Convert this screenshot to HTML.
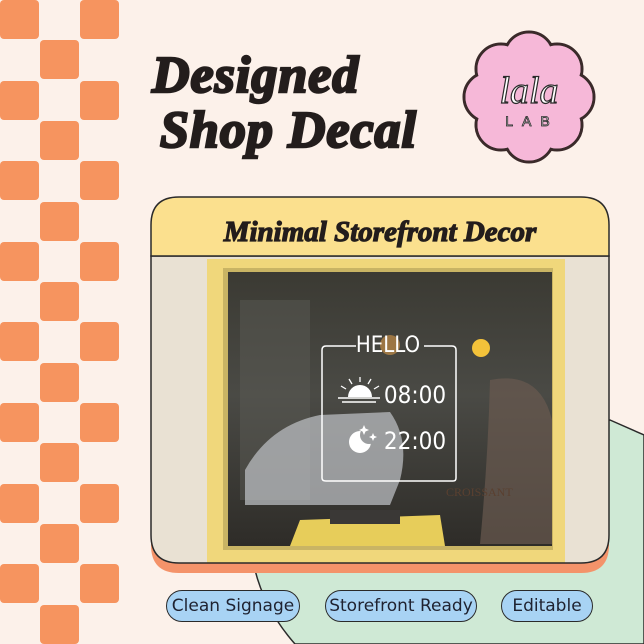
<!DOCTYPE html>
<html><head><meta charset="utf-8"><style>
*{margin:0;padding:0;box-sizing:border-box}
body{width:644px;height:644px;overflow:hidden;background:#fcf1ea;position:relative;font-family:"Liberation Sans",sans-serif}
.sq{position:absolute;width:39px;height:39px;background:#f6945f;border-radius:4px}
.title{position:absolute;left:152px;font-family:"Liberation Serif",serif;font-weight:bold;font-style:italic;color:#231d1c;font-size:52px;letter-spacing:1px;line-height:1;-webkit-text-stroke:2.5px #231d1c}
.pill{position:absolute;top:590px;height:32px;border:1.5px solid #2a2a2a;border-radius:16px;background:#a8d3f4;font-size:17px;color:#1f2230;display:flex;align-items:center;justify-content:center;font-family:"DejaVu Sans",sans-serif}
</style></head><body>
<div id="chk"></div>
<script>
var h='';for(var r=0;r<16;r++){var cols=r%2==0?[0,2]:[1];cols.forEach(function(c){h+='<div class="sq" style="left:'+(c*40)+'px;top:'+(r*40.3)+'px"></div>';});}
document.getElementById('chk').innerHTML=h;
</script>
<div class="title" style="top:50px">Designed</div>
<div class="title" style="top:105px;left:160px">Shop Decal</div>

<svg style="position:absolute;left:0;top:0" width="644" height="644">
 <path d="M610 420 L644 435 L644 644 L295 644 Q265 610 255 570 Z" fill="#cfe9d5" stroke="#2a2a2a" stroke-width="1.5"/>
 <g transform="translate(529,97)">
  <g fill="#f6b8d8" stroke="#3a2a2a" stroke-width="3">
   <circle cx="0" cy="-40" r="25"/><circle cx="28" cy="-28" r="25"/><circle cx="40" cy="0" r="25"/><circle cx="28" cy="28" r="25"/>
   <circle cx="0" cy="40" r="25"/><circle cx="-28" cy="28" r="25"/><circle cx="-40" cy="0" r="25"/><circle cx="-28" cy="-28" r="25"/>
  </g>
  <g fill="#f6b8d8">
   <circle cx="0" cy="-40" r="23.5"/><circle cx="28" cy="-28" r="23.5"/><circle cx="40" cy="0" r="23.5"/><circle cx="28" cy="28" r="23.5"/>
   <circle cx="0" cy="40" r="23.5"/><circle cx="-28" cy="28" r="23.5"/><circle cx="-40" cy="0" r="23.5"/><circle cx="-28" cy="-28" r="23.5"/>
   <circle r="45"/>
  </g>
  <text x="0" y="6" text-anchor="middle" font-family="Liberation Serif,serif" font-style="italic" font-size="38" fill="#fff" stroke="#2a2a2a" stroke-width="1.2">lala</text>
  <text x="3" y="29" text-anchor="middle" font-family="Liberation Sans,sans-serif" font-size="14" fill="#fff" stroke="#2a2a2a" stroke-width="0.8" letter-spacing="9">LAB</text>
 </g>
 <defs>
  <clipPath id="cp"><path d="M151 256 H609 V535 Q609 563 581 563 H179 Q151 563 151 535 Z"/></clipPath>
  <linearGradient id="gl" x1="0" y1="0" x2="0" y2="1"><stop offset="0" stop-color="#3b3a33"/><stop offset="0.45" stop-color="#4a4a45"/><stop offset="1" stop-color="#2e2c28"/></linearGradient>
  <mask id="mm"><rect x="340" y="420" width="50" height="50" fill="#fff"/><circle cx="369" cy="435" r="9" fill="#000"/></mask>
 </defs>
 <path d="M151 240 V545 Q151 573 179 573 H581 Q609 573 609 545 V240 Z" fill="#f4936a"/>
 <g clip-path="url(#cp)">
  <rect x="151" y="256" width="458" height="310" fill="#e9e1d3"/>
  <rect x="207" y="259" width="358" height="310" fill="#f0d77b"/>
  <rect x="223" y="268" width="330" height="282" fill="#c9b464"/>
  <rect x="228" y="272" width="324" height="274" fill="url(#gl)"/>
  <rect x="240" y="300" width="70" height="200" fill="#5a5954" opacity="0.5"/>
  <path d="M245 470 Q270 425 320 415 L390 412 Q410 440 400 480 L390 505 L245 505 Z" fill="#b9bcc0" opacity="0.75"/>
  <path d="M490 380 Q540 370 552 420 V544 H480 Q488 460 490 380Z" fill="#6a5a50" opacity="0.7"/>
  <path d="M300 520 L440 515 L445 546 L290 546Z" fill="#e7cd5a"/>
  <rect x="330" y="510" width="70" height="14" fill="#3a3836"/>
  <circle cx="481" cy="348" r="9" fill="#f3c23a"/>
  <circle cx="390" cy="345" r="10" fill="#d99a4a" opacity="0.6"/>
 </g>
 <path d="M151 535 V256 H609 V535 Q609 563 581 563 H179 Q151 563 151 535Z" fill="none" stroke="#2a2a2a" stroke-width="1.5"/>
 <path d="M151 256 V225 Q151 197 179 197 H581 Q609 197 609 225 V256 Z" fill="#fbe08e" stroke="#2a2a2a" stroke-width="1.5"/>
 <text x="380" y="241" text-anchor="middle" font-family="Liberation Serif,serif" font-weight="bold" font-style="italic" font-size="29" fill="#231d1c" stroke="#231d1c" stroke-width="1.2">Minimal Storefront Decor</text>
 <g stroke="#fff" fill="none" stroke-width="1.5">
  <path d="M356 346 H326 Q322 346 322 350 V478 Q322 481 326 481 H453 Q456 481 456 478 V350 Q456 346 452 346 H424"/>
 </g>
 <text x="388" y="352" text-anchor="middle" font-family="DejaVu Sans Condensed,DejaVu Sans,sans-serif" font-size="22" fill="#fff">HELLO</text>
 <text x="415" y="403" text-anchor="middle" font-family="DejaVu Sans Condensed,DejaVu Sans,sans-serif" font-size="24" fill="#fff">08:00</text>
 <text x="415" y="449" text-anchor="middle" font-family="DejaVu Sans Condensed,DejaVu Sans,sans-serif" font-size="24" fill="#fff">22:00</text>
 <g fill="#fff" stroke="#fff">
  <path d="M348 397 A12 12 0 0 1 372 397 Z" stroke="none"/>
  <line x1="338" y1="398" x2="380" y2="398" stroke-width="1.5"/>
  <line x1="342" y1="402" x2="376" y2="402" stroke-width="1.5"/>
  <g stroke-width="1.3"><line x1="360" y1="382" x2="360" y2="377"/><line x1="352" y1="384" x2="349" y2="379"/><line x1="368" y1="384" x2="371" y2="379"/><line x1="346" y1="389" x2="341" y2="386"/><line x1="374" y1="389" x2="379" y2="386"/></g>
  <circle cx="360" cy="442" r="11" stroke="none" mask="url(#mm)"/>
  <path d="M364 425 l1.5 3.5 3.5 1.5 -3.5 1.5 -1.5 3.5 -1.5 -3.5 -3.5 -1.5 3.5 -1.5Z" stroke="none"/>
  <path d="M373 433 l1.2 2.8 2.8 1.2 -2.8 1.2 -1.2 2.8 -1.2 -2.8 -2.8 -1.2 2.8 -1.2Z" stroke="none"/>
 </g>
 <text x="446" y="496" font-family="Liberation Serif,serif" font-size="12" fill="#5a4030">CROISSANT</text>
</svg>

<div class="pill" style="left:166px;width:134px">Clean Signage</div>
<div class="pill" style="left:325px;width:152px">Storefront Ready</div>
<div class="pill" style="left:501px;width:92px">Editable</div>
</body></html>
